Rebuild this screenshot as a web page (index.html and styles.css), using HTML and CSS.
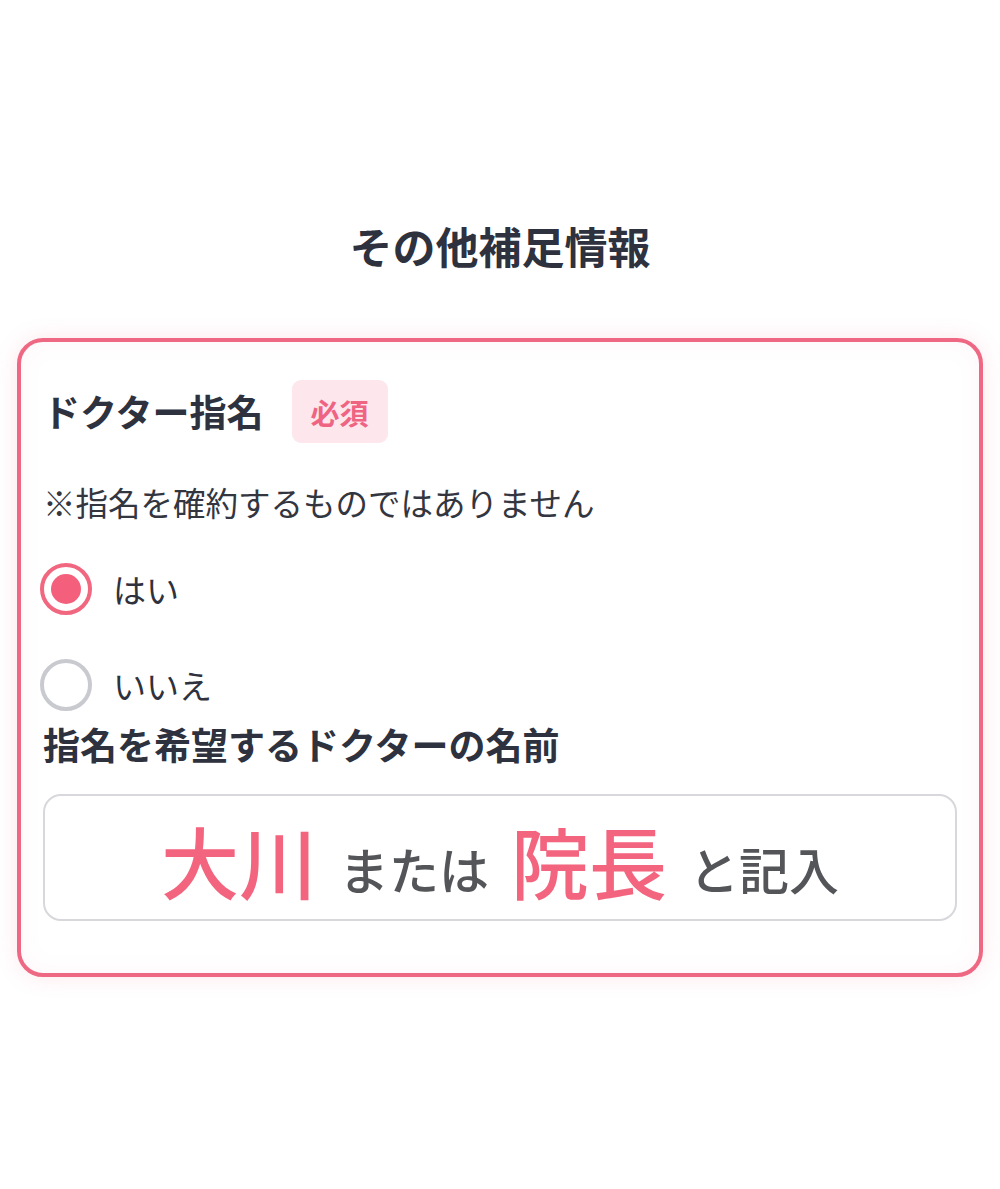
FILE: index.html
```html
<!DOCTYPE html>
<html lang="ja">
<head>
<meta charset="utf-8">
<title>その他補足情報</title>
<link rel="stylesheet" href="styles.css">
</head>
<body>
<main class="page">
  <h2 class="section-title">その他補足情報</h2>
  <section class="card">
    <div class="field-head">
      <h3 class="field-label">ドクター指名</h3>
      <span class="badge">必須</span>
    </div>
    <p class="note">※指名を確約するものではありません</p>
    <div class="radios">
      <label class="radio">
        <span class="radio-mark checked"></span>
        <span class="radio-text">はい</span>
      </label>
      <label class="radio">
        <span class="radio-mark"></span>
        <span class="radio-text">いいえ</span>
      </label>
    </div>
    <h3 class="field-label sub">指名を希望するドクターの名前</h3>
    <div class="input">
      <span class="ph-big">大川</span>
      <span class="ph-small">または</span>
      <span class="ph-big">院長</span>
      <span class="ph-small">と記入</span>
    </div>
  </section>
</main>
</body>
</html>
```

FILE: styles.css
```css
* { box-sizing: border-box; }
html, body { margin: 0; padding: 0; background: #ffffff; }
body {
  font-family: "Noto Sans CJK JP", "Noto Sans", sans-serif;
  color: #2f323d;
}
.page {
  padding: 216px 17px 200px;
}
.section-title {
  margin: 0 0 63px;
  text-align: center;
  font-size: 43px;
  line-height: 59px;
  font-weight: 700;
  color: #2e313e;
}
.card {
  border: 4px solid #ef6883;
  border-radius: 26px;
  padding: 38px 22px 52px 22px;
  background: #ffffff;
  box-shadow: 0 0 22px rgba(239, 104, 131, 0.16), inset 0 0 24px rgba(239, 104, 131, 0.06);
}
.field-head {
  display: flex;
  align-items: center;
  gap: 28px;
  height: 63px;
}
.field-label {
  margin: 0;
  font-size: 37px;
  line-height: 47px;
  font-weight: 700;
  color: #2e313e;
}
.badge {
  display: flex;
  align-items: center;
  justify-content: center;
  width: 96px;
  height: 63px;
  border-radius: 9px;
  background: #fde7ed;
  color: #ee6482;
  font-size: 29px;
  font-weight: 700;
}
.note {
  margin: 35px 0 0;
  font-size: 32.5px;
  line-height: 48px;
  color: #33363f;
}
.radios {
  display: flex;
  flex-direction: column;
  gap: 44px;
  margin-top: 37px;
  margin-left: -3px;
}
.radio {
  display: flex;
  align-items: center;
  gap: 21px;
  height: 52px;
}
.radio-mark {
  width: 52px;
  height: 52px;
  border-radius: 50%;
  border: 4px solid #c9cacf;
  background: #ffffff;
  flex: none;
  display: flex;
  align-items: center;
  justify-content: center;
}
.radio-mark.checked {
  border-color: #f1677f;
}
.radio-mark.checked::after {
  content: "";
  width: 30px;
  height: 30px;
  border-radius: 50%;
  background: #f45f7b;
}
.radio-text {
  font-size: 33px;
  line-height: 48px;
  color: #2f323d;
}
.field-label.sub {
  margin-top: 10px;
}
.input {
  margin-top: 26px;
  height: 127px;
  border: 2px solid #d8d8dc;
  border-radius: 18px;
  background: #ffffff;
  display: flex;
  align-items: center;
  justify-content: center;
  gap: 22px;
  padding-top: 4px;
}
.ph-big {
  font-size: 78px;
  line-height: 1;
  font-weight: 500;
  color: #f3657f;
}
.ph-small {
  font-size: 50px;
  line-height: 1;
  font-weight: 500;
  color: #545558;
  position: relative;
  top: 8px;
}
```
